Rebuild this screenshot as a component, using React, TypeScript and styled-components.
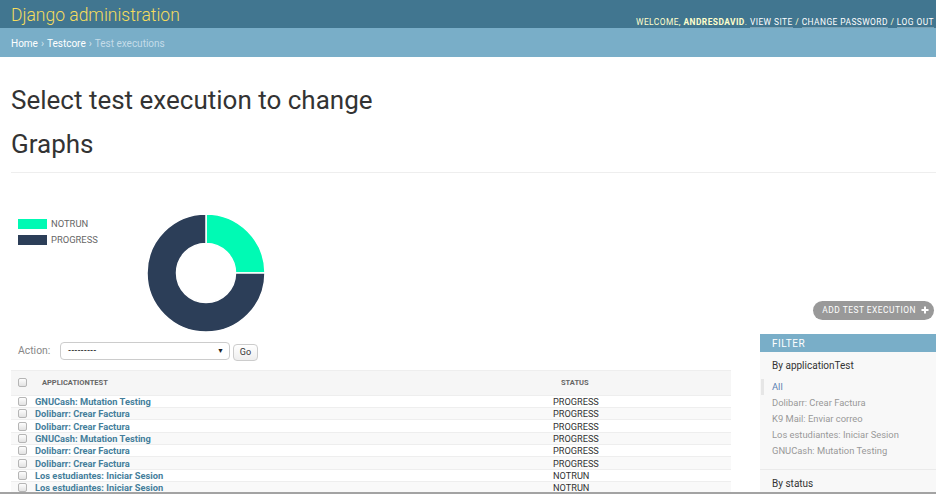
import React from "react";
import styled, { createGlobalStyle } from "styled-components";

const Global = createGlobalStyle`
  html, body { margin: 0; padding: 0; background: #fff; }
  body { font-family: Roboto, "Liberation Sans", Arial, sans-serif; color: #333; overflow: hidden; width: 936px; height: 497px; }
  * { box-sizing: border-box; }
`;

const Header = styled.header`
  height: 28px;
  background: #417690;
  display: flex;
  justify-content: space-between;
  align-items: center;
  padding: 0 2px 0 11px;
`;

const Branding = styled.div`
  font-size: 17.5px;
  font-weight: 300;
  color: #f5dd5d;
  line-height: 1;
  margin-top: 3px;
`;

const UserTools = styled.div`
  align-self: flex-end;
  margin-bottom: 0;
  font-size: 8.4px;
  letter-spacing: 0.45px;
  text-transform: uppercase;
  color: #ffc;
  line-height: 11px;
  strong { font-weight: 700; }
`;

const ToolLink = styled.a`
  color: #fff;
  text-decoration: none;
  border-bottom: 1px solid rgba(255, 255, 255, 0.3);
`;

const Breadcrumbs = styled.nav`
  height: 29px;
  background: #79aec8;
  display: flex;
  align-items: center;
  padding: 1px 11px 0;
  font-size: 10px;
  color: #c4dce8;
`;

const Crumb = styled.a`
  color: #fff;
  text-decoration: none;
`;

const Sep = styled.span`
  margin: 0 3px;
  color: #d6e6ee;
`;

const Content = styled.main`
  padding: 28px 0 0 11px;
`;

const Title = styled.h1`
  margin: 0;
  font-size: 26px;
  font-weight: 400;
  line-height: 1.2;
  color: #333;
`;

const SubTitle = styled(Title)`
  margin-top: 12.5px;
`;

const Divider = styled.hr`
  border: 0;
  border-top: 1px solid #eee;
  margin: 12px 0 0 0;
  height: 0;
`;

const ChartRow = styled.section`
  display: flex;
  align-items: flex-start;
  padding-top: 41px;
`;

const Legend = styled.ul`
  list-style: none;
  margin: 5px 0 0 7px;
  padding: 0;
  width: 129px;
  display: flex;
  flex-direction: column;
  gap: 6px;
`;

const LegendItem = styled.li`
  display: flex;
  align-items: center;
  gap: 4px;
  font-size: 9.4px;
  color: #666;
  height: 10px;
`;

const Swatch = styled.span<{ $c: string }>`
  width: 29px;
  height: 10px;
  background: ${(p) => p.$c};
`;

const Donut = styled.svg`
  width: 118px;
  height: 118px;
  display: block;
`;

const AddButton = styled.a`
  margin-left: auto;
  align-self: flex-end;
  margin-bottom: 12px;
  margin-right: 2px;
  height: 19px;
  display: flex;
  align-items: center;
  gap: 5px;
  padding: 0 5px 0 9px;
  border-radius: 10px;
  background: #999;
  color: #fff;
  font-size: 8.4px;
  letter-spacing: 0.5px;
  text-transform: uppercase;
  text-decoration: none;
`;

const Plus = styled.svg`
  width: 8px;
  height: 8px;
`;

const ListRow = styled.div`
  display: flex;
  margin-top: 2px;
`;

const Main = styled.div`
  width: 720px;
  flex: none;
`;

const Actions = styled.div`
  height: 36px;
  display: flex;
  align-items: flex-start;
  padding: 8px 0 0 7px;
`;

const ActionLabel = styled.label`
  font-size: 10.4px;
  color: #888;
  margin-top: 2px;
  width: 42px;
`;

const Select = styled.div`
  width: 170px;
  height: 18px;
  border: 1px solid #ccc;
  border-radius: 4px;
  background: #fff;
  display: flex;
  align-items: center;
  justify-content: space-between;
  padding: 0 5px 0 7px;
  font-size: 8px;
  font-weight: 700;
  color: #222;
`;

const Arrow = styled.span`
  font-size: 7px;
  color: #222;
`;

const GoButton = styled.button`
  margin: 2px 0 0 3px;
  width: 25px;
  height: 17px;
  padding: 0;
  border: 1px solid #ccc;
  border-radius: 4px;
  background: linear-gradient(#fff, #eee);
  font-family: inherit;
  font-size: 9px;
  color: #333;
`;

const Table = styled.table`
  width: 720px;
  border-collapse: collapse;
  table-layout: fixed;
`;

const HeadCell = styled.th<{ $w?: number; $pad?: number }>`
  ${(p) => (p.$w ? `width: ${p.$w}px;` : "")}
  height: 25px;
  background: #f6f6f6;
  border-top: 1px solid #eee;
  border-bottom: 1px solid #eee;
  text-align: left;
  padding: 0 0 0 ${(p) => p.$pad ?? 0}px;
  font-size: 7.5px;
  font-weight: 700;
  color: #666;
  text-transform: uppercase;
  vertical-align: middle;
`;

const Row = styled.tr<{ $alt: boolean }>`
  background: ${(p) => (p.$alt ? "#f9f9f9" : "#fff")};
`;

const Cell = styled.td<{ $pad?: number }>`
  height: 12.3px;
  padding: 0 0 0 ${(p) => p.$pad ?? 0}px;
  border-bottom: 1px solid #eee;
  font-size: 9.3px;
  line-height: 11px;
  vertical-align: middle;
  white-space: nowrap;
`;

const Check = styled.span`
  display: block;
  width: 9px;
  height: 9px;
  border: 1px solid #b5b5b5;
  border-radius: 2px;
  background: linear-gradient(#fdfdfd, #e2e2e2);
`;

const RowLink = styled.a`
  color: #447e9b;
  font-weight: 700;
  text-decoration: none;
`;

const Status = styled.span`
  color: #333;
  font-size: 9.2px;
`;

const Filter = styled.aside`
  width: 176px;
  margin-left: 29px;
  background: #f8f8f8;
  min-height: 170px;
`;

const FilterHead = styled.h2`
  margin: 0;
  height: 18px;
  background: #79aec8;
  color: #fff;
  font-size: 10px;
  font-weight: 400;
  letter-spacing: 0.5px;
  padding: 1px 12px 0;
  display: flex;
  align-items: center;
`;

const FilterTitle = styled.h3`
  margin: 0;
  padding: 6px 12px 0;
  font-size: 10px;
  font-weight: 400;
  line-height: 16px;
  color: #333;
`;

const FilterList = styled.ul`
  list-style: none;
  margin: 0;
  padding: 5px 12px 10px;
  border-bottom: 1px solid #eaeaea;
`;

const FilterItem = styled.li<{ $sel?: boolean }>`
  height: 16px;
  display: flex;
  align-items: center;
  font-size: 9.4px;
  color: ${(p) => (p.$sel ? "#5b80b2" : "#999")};
  ${(p) =>
    p.$sel
      ? `border-left: 3px solid #e6e6e6; margin-left: -11px; padding-left: 8px;`
      : ""}
`;

const BottomEdge = styled.div`
  position: fixed;
  left: 0;
  right: 0;
  bottom: 0;
  height: 5px;
  background: #fff;
  border-top: 2px solid #a3a3a3;
`;

const rows: [string, string][] = [
  ["GNUCash: Mutation Testing", "PROGRESS"],
  ["Dolibarr: Crear Factura", "PROGRESS"],
  ["Dolibarr: Crear Factura", "PROGRESS"],
  ["GNUCash: Mutation Testing", "PROGRESS"],
  ["Dolibarr: Crear Factura", "PROGRESS"],
  ["Dolibarr: Crear Factura", "PROGRESS"],
  ["Los estudiantes: Iniciar Sesion", "NOTRUN"],
  ["Los estudiantes: Iniciar Sesion", "NOTRUN"],
];

const filters = [
  "Dolibarr: Crear Factura",
  "K9 Mail: Enviar correo",
  "Los estudiantes: Iniciar Sesion",
  "GNUCash: Mutation Testing",
];

export default function App() {
  return (
    <>
      <Global />
      <Header>
        <Branding>Django administration</Branding>
        <UserTools>
          Welcome, <strong>andresdavid</strong>. <ToolLink href="#">View site</ToolLink> /{" "}
          <ToolLink href="#">Change password</ToolLink> / <ToolLink href="#">Log out</ToolLink>
        </UserTools>
      </Header>
      <Breadcrumbs>
        <Crumb href="#">Home</Crumb>
        <Sep>›</Sep>
        <Crumb href="#">Testcore</Crumb>
        <Sep>›</Sep>
        Test executions
      </Breadcrumbs>
      <Content>
        <Title>Select test execution to change</Title>
        <SubTitle>Graphs</SubTitle>
        <Divider />
        <ChartRow>
          <Legend>
            <LegendItem>
              <Swatch $c="#00fab4" />
              NOTRUN
            </LegendItem>
            <LegendItem>
              <Swatch $c="#2c3e58" />
              PROGRESS
            </LegendItem>
          </Legend>
          <Donut viewBox="0 0 118 118">
            <path
              d="M59 0 A59 59 0 0 1 118 59 L88.5 59 A29.5 29.5 0 0 0 59 29.5 Z"
              fill="#00fab4"
              stroke="#fff"
              strokeWidth="1.5"
            />
            <path
              d="M118 59 A59 59 0 1 1 59 0 L59 29.5 A29.5 29.5 0 1 0 88.5 59 Z"
              fill="#2c3e58"
              stroke="#fff"
              strokeWidth="1.5"
            />
          </Donut>
          <AddButton href="#">
            Add test execution
            <Plus viewBox="0 0 8 8">
              <path d="M4 0.5 V7.5 M0.5 4 H7.5" stroke="#fff" strokeWidth="2" />
            </Plus>
          </AddButton>
        </ChartRow>
        <ListRow>
          <Main>
            <Actions>
              <ActionLabel>Action:</ActionLabel>
              <Select>
                ---------
                <Arrow>▼</Arrow>
              </Select>
              <GoButton>Go</GoButton>
            </Actions>
            <Table>
              <thead>
                <tr>
                  <HeadCell $w={20} $pad={7}>
                    <Check />
                  </HeadCell>
                  <HeadCell $w={518} $pad={11}>
                    Applicationtest
                  </HeadCell>
                  <HeadCell $pad={12}>Status</HeadCell>
                </tr>
              </thead>
              <tbody>
                {rows.map(([app, status], i) => (
                  <Row key={i} $alt={i % 2 === 1}>
                    <Cell $pad={7}>
                      <Check />
                    </Cell>
                    <Cell $pad={4}>
                      <RowLink href="#">{app}</RowLink>
                    </Cell>
                    <Cell $pad={4}>
                      <Status>{status}</Status>
                    </Cell>
                  </Row>
                ))}
              </tbody>
            </Table>
          </Main>
          <Filter>
            <FilterHead>FILTER</FilterHead>
            <FilterTitle>By applicationTest</FilterTitle>
            <FilterList>
              <FilterItem $sel>All</FilterItem>
              {filters.map((f) => (
                <FilterItem key={f}>{f}</FilterItem>
              ))}
            </FilterList>
            <FilterTitle>By status</FilterTitle>
          </Filter>
        </ListRow>
      </Content>
      <BottomEdge />
    </>
  );
}
